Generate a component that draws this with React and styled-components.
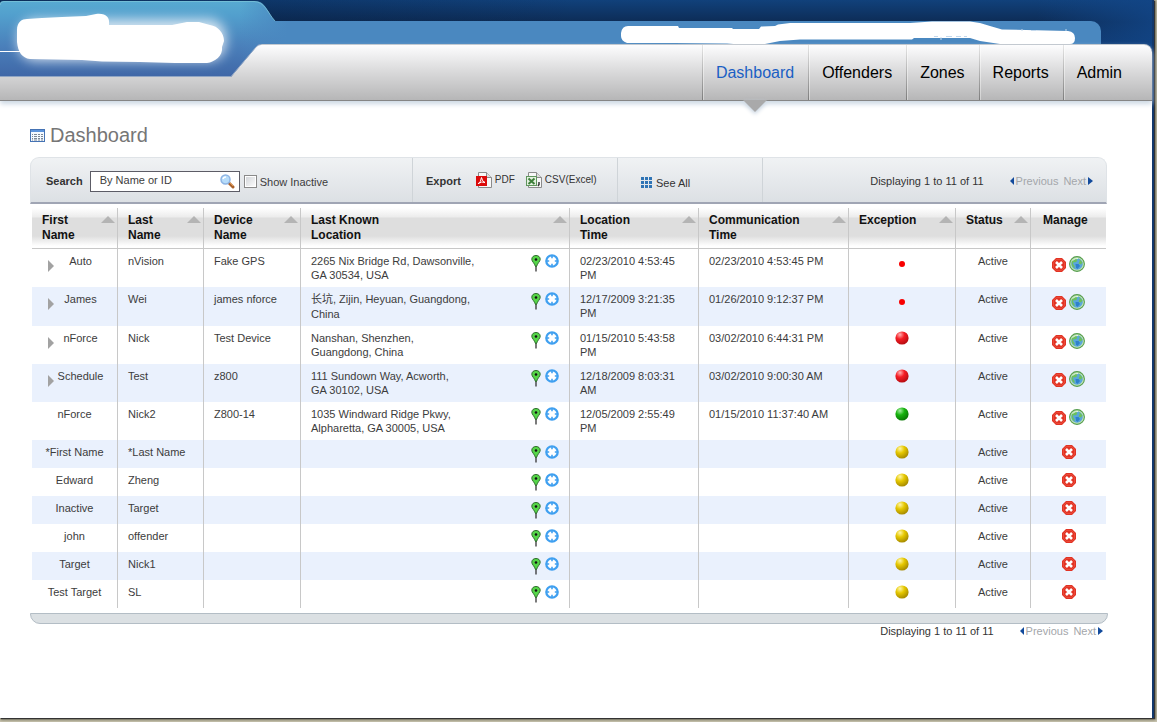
import React, { useState } from "react";
import styled, { createGlobalStyle } from "styled-components";

const GlobalStyle = createGlobalStyle`
  * {
    box-sizing: border-box;
  }

  body {
    margin: 0;
    background: #cdc9b4;
    color: #3c3c3c;
    font-family: "Liberation Sans", Arial, "Noto Sans CJK SC", sans-serif;
    font-size: 11px;
    line-height: 14px;
  }

  button,
  input {
    font: inherit;
    color: inherit;
  }

  svg {
    display: block;
    flex: none;
  }
`;

const Page = styled.div`
  min-height: calc(100vh - 4px);
  margin: 0 3px 4px 0;
  border-right: 2px solid #12386c;
  background: #fff;
  box-shadow: 1px 1px 1px 0 #333, 1px 1px 3px 1px #77745f;
`;

const Header = styled.header`
  position: relative;
  padding-top: 21px;
  background: linear-gradient(
      90deg,
      rgba(4, 22, 50, 0.45),
      rgba(18, 66, 128, 0) 50%,
      rgba(18, 70, 136, 0) 90%,
      rgba(18, 70, 136, 0.8)
    ),
    linear-gradient(#11417b, #0d2c56 22px, #103a72 50px);
`;

const Logo = styled.svg`
  position: absolute;
  top: 0;
  left: 0;
`;

const AccountBar = styled.div`
  display: flex;
  justify-content: flex-end;
  height: 23px;
  margin-right: 51px;
  padding-right: 25px;
  border-radius: 0 10px 0 0;
  background: #4a88c0;
`;

const Nav = styled.nav`
  display: flex;
  justify-content: flex-end;
  height: 57px;
  padding-right: 16px;
  border-top: 1px solid #c3c9d0;
  border-bottom: 1px solid #858585;
  border-radius: 0 8px 0 0;
  background: linear-gradient(#fdfdfe, #dcdcdd 45%, #b6b6b7);
  box-shadow: 0 3px 5px #ccd8e4;
`;

const NavLink = styled.a`
  position: relative;
  display: flex;
  align-items: center;
  padding: 0 14px;
  background: linear-gradient(#e6e6e6, #7d7d7d) 0 0 / 1px 100% no-repeat,
    linear-gradient(#fff, #d2d2d2) 1px 0 / 1px 100% no-repeat;
  color: ${(props) => (props.$active ? "#1a5fc4" : "#000")};
  font-size: 16px;
  text-decoration: none;

  &::after {
    content: "";
    display: ${(props) => (props.$active ? "block" : "none")};
    position: absolute;
    top: 100%;
    left: calc(50% - 12px);
    border: 12px solid transparent;
    border-top-color: #a9a9aa;
    border-bottom: 0;
    filter: drop-shadow(0 2px 2px #c3d0de);
  }
`;

const Main = styled.main`
  padding: 22px 45px 40px 30px;
`;

const Title = styled.h1`
  display: flex;
  align-items: center;
  gap: 5px;
  margin: 0 0 10px;
  color: #767676;
  font-size: 20px;
  font-weight: normal;
  line-height: 24px;
`;

const Toolbar = styled.div`
  display: flex;
  height: 47px;
  border: 1px solid #dfe3e7;
  border-bottom: 2px solid #a0a5b4;
  border-radius: 9px 9px 0 0;
  background: linear-gradient(#f0f2f4, #dce0e4);
`;

const ToolGroup = styled.div`
  display: flex;
  align-items: center;
  width: ${(props) => props.$width || "auto"};
  flex: ${(props) => (props.$width ? "none" : "1")};
  justify-content: ${(props) => (props.$width ? "flex-start" : "flex-end")};
  padding: 2px 13px 0 ${(props) => props.$indent || "13px"};
  border-right: ${(props) => (props.$width ? "1px solid #cfd4d8" : "0")};
`;

const ToolLabel = styled.label`
  margin-right: 7px;
  color: #333;
  font-weight: bold;
`;

const ExportLabel = styled.span`
  margin-right: 15px;
  color: #333;
  font-weight: bold;
`;

const SearchBox = styled.div`
  display: flex;
  align-items: center;
  width: 150px;
  height: 21px;
  margin-right: 4px;
  border: 1px solid #5c5c66;
  background: #fff;
`;

const SearchInput = styled.input`
  flex: 1;
  min-width: 0;
  padding: 0 0 2px 9px;
  border: 0;
  outline: 0;
  background: none;
`;

const IconButton = styled.button`
  display: block;
  padding: 0;
  border: 0;
  background: none;
  cursor: pointer;
`;

const SearchButton = styled(IconButton)`
  padding-right: 4px;
`;

const Checkbox = styled.input`
  appearance: none;
  width: 13px;
  height: 13px;
  margin: 0 3px 0 0;
  border: 1px solid #8a8a8a;
  background: linear-gradient(135deg, #cfd2d6, #fff);
  box-shadow: inset 0 0 0 1px #fff;

  &:checked {
    background: #4a88c0;
  }
`;

const CheckLabel = styled.label`
  padding-top: 2px;
`;

const ToolLink = styled.a`
  display: flex;
  align-items: center;
  gap: ${(props) => (props.$small ? "3px" : "4px")};
  margin-right: 11px;
  padding: ${(props) => (props.$small ? "0 0 2px" : "3px 0 0")};
  color: #333;
  font-size: ${(props) => (props.$small ? "10px" : "11px")};
  text-decoration: none;
`;

const PagerBar = styled.div`
  display: flex;
  align-items: center;
  justify-content: flex-end;
  gap: 5px;
`;

const PagerCount = styled.span`
  margin-right: 21px;
  color: #333;
`;

const PagerButton = styled.button`
  display: flex;
  align-items: center;
  gap: 2px;
  padding: 0;
  border: 0;
  background: none;
  color: #a3a6aa;
`;

const Footer = styled.div`
  padding-right: 4px;
`;

const Grid = styled.table`
  width: calc(100% - 3px);
  margin: 4px 1px 5px 2px;
  border-collapse: separate;
  border-spacing: 0;
  table-layout: fixed;
`;

const HeadCell = styled.th`
  width: ${(props) => props.$width || "auto"};
  height: 41px;
  padding: 5px 2px 0 10px;
  border-right: 1px solid #c8c8c8;
  border-bottom: 1px solid #c8c8c8;
  background: linear-gradient(#fff, #ececec 9px, #dedede 10px, #dedede 28px, #fff 38px);
  color: #111;
  font-size: 12px;
  line-height: 15px;
  text-align: left;
  vertical-align: top;
  white-space: pre-line;

  &:last-child {
    padding-left: 12px;
    border-right: 0;
  }
`;

const SortButton = styled.button`
  display: flex;
  justify-content: space-between;
  align-items: flex-start;
  width: 100%;
  padding: 0;
  border: 0;
  background: none;
  text-align: left;
  white-space: pre-line;
  cursor: pointer;
`;

const SortArrow = styled.span`
  margin-top: 3px;
  border: 7px solid transparent;
  border-top: 0;
  border-bottom: 7px solid #b4b4b4;
`;

const Row = styled.tr`
  height: ${(props) => (props.$tall ? "38px" : "28px")};

  &:nth-child(even) {
    background: #eaf1fd;
  }
`;

const Cell = styled.td`
  padding: 5px 10px 4px;
  border-right: 1px solid #c8c8c8;
  text-align: ${(props) => (props.$center ? "center" : "left")};
  vertical-align: top;
  white-space: ${(props) => (props.$wrap ? "normal" : "nowrap")};

  &:last-child {
    border-right: 0;
  }
`;

const NameBox = styled.div`
  display: flex;
  align-items: flex-start;
`;

const NameText = styled.span`
  flex: 1;
  text-align: center;
`;

const ExpandButton = styled(IconButton)`
  padding: 6px 0 0 6px;
`;

const Address = styled.div`
  display: flex;
  justify-content: space-between;
  white-space: pre-line;
`;

/* Han glyphs need a slightly taller line */
const AddressText = styled.div`
  line-height: ${(props) => (props.$han ? "15px" : "14px")};
`;

const AddressIcons = styled.div`
  display: flex;
  align-items: flex-start;
  gap: 4px;
`;

const Center = styled.div`
  display: flex;
  justify-content: center;
  padding-top: ${(props) => (props.$small ? "7px" : "0")};
`;

const ManageButtons = styled.div`
  display: flex;
  align-items: flex-end;
  justify-content: center;
  gap: 3px;
  padding-top: ${(props) => (props.$tall ? "2px" : "0")};
`;

const BottomBar = styled.div`
  height: 11px;
  margin-right: -1px;
  border: 1px solid #b3bdc5;
  border-radius: 0 0 10px 10px;
  background: #dbe0e3;
`;

const ballColors = {
  red: ["#ffb0b0", "#f51d24", "#b80d12"],
  green: ["#a5eda0", "#17b30e", "#0a7a05"],
  yellow: ["#fff6a8", "#e6c800", "#a88c00"],
};

function LogoArt() {
  return (
    <Logo width="300" height="78" viewBox="0 0 300 78" aria-hidden="true">
      <defs>
        <linearGradient id="tab" x1="0" y1="0" x2="0" y2="1">
          <stop offset="0" stopColor="#58abd2" />
          <stop offset="0.2" stopColor="#529fcd" />
          <stop offset="0.6" stopColor="#4a7fba" />
          <stop offset="1" stopColor="#3f66a6" />
        </linearGradient>
        <linearGradient id="fade" x1="0" y1="0" x2="1" y2="0">
          <stop offset="0" stopColor="#4a88c0" stopOpacity="0" />
          <stop offset="0.8" stopColor="#4a88c0" />
        </linearGradient>
        <filter id="glow" x="-20%" y="-50%" width="140%" height="200%">
          <feGaussianBlur stdDeviation="6" />
        </filter>
        <clipPath id="tabClip">
          <path d="M0 4Q0 1 4 1H254C266 1 267 12 275 21H300V44H262Q259 44 256 47L231 77H0Z" />
        </clipPath>
      </defs>
      <g clipPath="url(#tabClip)">
        <rect width="300" height="78" fill="url(#tab)" />
        <rect x="240" width="60" height="78" fill="url(#fade)" />
        <rect x="18" y="19" width="208" height="42" rx="18" fill="#fff" opacity="0.75" filter="url(#glow)" />
        <path d="M0 51.500H22" stroke="#fff" />
      </g>
      <path
        d="M0 5Q0 1.500 4 1.500H254C265 2 267 12 275 21"
        fill="none"
        stroke="#7fc6d8"
        opacity="0.7"
      />
      <path d="M0 76.500H231L256 47Q258 44.500 261 44.500" fill="none" stroke="#8fa5c4" />
      <path
        fill="#fff"
        d="M17 30C17 22 22 19 27 19L42 18 62 17 86 16 96 14C106 13 110 17 109 25H172L187 22H199L210 25C218 26 224 33 224 41L222 47C223 56 215 62 207 63H175L140 62 102 61.500 82 60 30 59C22 58 18 52 17 42Z"
      />
    </Logo>
  );
}

function AccountArt() {
  return (
    <svg width="455" height="23" viewBox="621 21 455 23" aria-hidden="true">
      <path
        fill="#fff"
        d="M621 33Q622 26 628 26H678L679 28H732L733 29H759L761 26.500 775 26 778 24.500 790 23H910L932 21.500H970L980 23 990 26 1002 29.500 1068 31Q1075 32 1075 38T1070 44H1000L980 41 970 38H914L912 39.500H800L780 41 765 44 740 44.500 727 43.500 675 43H627Q621 41 621 36Z"
      />
      <path
        d="M934 36.500H938M941 37V40M946 36.500H952M956 36.500H961M964 36.500H967M1022 29V31M1031 30.500H1036M1066 29V31"
        stroke="#c3d8ec"
        fill="none"
      />
    </svg>
  );
}

function ListIcon() {
  return (
    <svg width="15" height="13" viewBox="0 0 15 13">
      <rect x="0.500" y="0.500" width="14" height="12" fill="#f4f9ff" stroke="#4573b4" />
      <path d="M1 1H14V3H1Z" fill="#5b93dc" />
      <path
        d="M2 5.500H13M2 7.500H13M2 9.500H13M2 11H13"
        stroke="#7b8796"
        strokeDasharray="1 1 3 1 2 1 3"
      />
    </svg>
  );
}

function SearchIcon() {
  return (
    <svg width="15" height="15" viewBox="0 0 15 15">
      <path d="M9 9L13 13" stroke="#a8612c" strokeWidth="3" strokeLinecap="round" />
      <path d="M9.500 8.500L13 12" stroke="#e39a52" strokeWidth="1" />
      <circle cx="5.500" cy="5.500" r="4.500" fill="#b6dcfa" stroke="#8db4e4" strokeWidth="1.500" />
      <path d="M3 5Q3.500 3 6 3" stroke="#fff" strokeWidth="1.500" fill="none" />
    </svg>
  );
}

function PdfIcon() {
  return (
    <svg width="16" height="16" viewBox="0 0 16 16">
      <path d="M2.500 0.500H10.500L15.500 5.500V15.500H2.500Z" fill="#f8f8f8" stroke="#8b8b8b" />
      <path d="M10.500 0.500V5.500H15.500" fill="#ddd" stroke="#8b8b8b" />
      <rect y="4" width="11" height="10" fill="#dc0a0a" />
      <path
        d="M2 12Q5 10 5.500 5.500Q6 9.500 9 10.500Q5.500 9 2.500 11.500"
        fill="none"
        stroke="#fff"
      />
    </svg>
  );
}

function CsvIcon() {
  return (
    <svg width="16" height="16" viewBox="0 0 16 16">
      <path d="M2.500 0.500H10.500L15.500 5.500V15.500H2.500Z" fill="#f8f8f8" stroke="#8b8b8b" />
      <path d="M10.500 0.500V5.500H15.500" fill="#ddd" stroke="#8b8b8b" />
      <rect x="0.500" y="4.500" width="10" height="9" fill="#e4f1e0" stroke="#5f955c" />
      <path d="M2.500 6.500L8.500 12M8.500 6.500L2.500 12" stroke="#3d7f3a" strokeWidth="2" />
      <path d="M13 10V12.500L12 14" stroke="#333" strokeWidth="1.500" fill="none" />
    </svg>
  );
}

function GridIcon() {
  return (
    <svg width="11" height="11" viewBox="0 0 11 11" fill="#2f74b5">
      <path d="M0 0H3V3H0ZM4 0H7V3H4ZM8 0H11V3H8ZM0 4H3V7H0ZM4 4H7V7H4ZM8 4H11V7H8ZM0 8H3V11H0ZM4 8H7V11H4ZM8 8H11V11H8Z" />
    </svg>
  );
}

function PinIcon() {
  return (
    <svg width="10" height="18" viewBox="0 0 10 18">
      <path d="M5 11V17.500" stroke="#222" strokeWidth="1.200" />
      <path
        d="M5 1.500C2.500 1.500 0.800 3 0.800 5.300C0.800 7.500 3.500 9 4.500 12.500H5.500C6.500 9 9.200 7.500 9.200 5.300C9.200 3 7.500 1.500 5 1.500Z"
        fill="#55d648"
        stroke="#2d6b2b"
      />
      <circle cx="5" cy="5.500" r="1.300" fill="#111" />
    </svg>
  );
}

function TargetIcon() {
  return (
    <svg width="14" height="14" viewBox="0 0 14 14">
      <circle cx="7" cy="7" r="5.700" fill="#fff" stroke="#40a0f0" strokeWidth="2.300" />
      <path
        d="M7 2V4.200M7 9.800V12M2 7H4.200M9.800 7H12"
        stroke="#40a0f0"
        strokeWidth="1.600"
      />
    </svg>
  );
}

function DeleteIcon() {
  return (
    <svg width="14" height="14" viewBox="0 0 14 14">
      <path d="M4 0H10L14 4V10L10 14H4L0 10V4Z" fill="#e23324" />
      <path d="M4.500 1.500H9.500L12.500 4.500V9.500L9.500 12.500H4.500L1.500 9.500V4.500Z" fill="none" stroke="#ee5a48" strokeWidth="0.600" />
      <path d="M4 4L10 10M10 4L4 10" stroke="#fff" strokeWidth="2.600" />
    </svg>
  );
}

function GlobeIcon() {
  return (
    <svg width="16" height="16" viewBox="0 0 16 16">
      <circle cx="8" cy="8" r="7.400" fill="#c4e6b4" stroke="#559c4e" strokeWidth="1.100" />
      <circle cx="8" cy="8" r="5.800" fill="#5aa6dc" />
      <path
        d="M3 5Q5 2 9 2.300L7.500 4 8.500 5 6 6.500 4.500 6 4 8 5.500 10 5.500 12.500Q1.500 10 3 5ZM10.500 3L13.500 6.500 12 8.500 9.500 7.500 10.500 5.500Z"
        fill="#6cc05c"
      />
      <path d="M6.500 8L9.500 8 11 10 8.500 13 7 11.500Z" fill="#2e80cc" />
      <path d="M3.500 4.500Q6 2 9 2.500" stroke="#e7f6df" fill="none" />
    </svg>
  );
}

function Triangle({ direction, width, height, color }) {
  const d =
    direction === "left"
      ? `M${width} 0V${height}L0 ${height / 2}Z`
      : `M0 0V${height}L${width} ${height / 2}Z`;
  return (
    <svg width={width} height={height}>
      <path d={d} fill={color} />
    </svg>
  );
}

function StatusBall({ type }) {
  if (type === "dot") {
    return (
      <svg width="6" height="6" viewBox="0 0 6 6">
        <circle cx="3" cy="3" r="3" fill="#f80000" />
      </svg>
    );
  }

  const [light, base, dark] = ballColors[type];
  return (
    <svg width="14" height="14" viewBox="0 0 14 14">
      <defs>
        <radialGradient id={"ball-" + type} cx="0.350" cy="0.250" r="0.750">
          <stop offset="0" stopColor={light} />
          <stop offset="0.450" stopColor={base} />
          <stop offset="1" stopColor={dark} />
        </radialGradient>
      </defs>
      <circle cx="7" cy="7" r="6.600" fill={`url(#ball-${type})`} />
    </svg>
  );
}

function Pager() {
  return (
    <PagerBar>
      <PagerCount>Displaying 1 to 11 of 11</PagerCount>
      <PagerButton type="button">
        <Triangle direction="left" width={4} height={8} color="#124a9c" />
        Previous
      </PagerButton>
      <PagerButton type="button">
        Next
        <Triangle direction="right" width={5} height={8} color="#124a9c" />
      </PagerButton>
    </PagerBar>
  );
}

const navItems = ["Dashboard", "Offenders", "Zones", "Reports", "Admin"];

const columns = [
  { label: "First\nName", width: "86px", sortable: true },
  { label: "Last\nName", width: "86px", sortable: true },
  { label: "Device\nName", width: "97px", sortable: true },
  { label: "Last Known\nLocation", sortable: true },
  { label: "Location\nTime", width: "129px", sortable: true },
  { label: "Communication\nTime", width: "150px", sortable: true },
  { label: "Exception", width: "107px", sortable: true },
  { label: "Status", width: "75px", sortable: true },
  { label: "Manage", width: "75px" },
];

const offenders = [
  {
    first: "Auto",
    last: "nVision",
    device: "Fake GPS",
    address: "2265 Nix Bridge Rd, Dawsonville,\nGA 30534, USA",
    located: "02/23/2010 4:53:45 PM",
    contacted: "02/23/2010 4:53:45 PM",
    exception: "dot",
    expandable: true,
  },
  {
    first: "James",
    last: "Wei",
    device: "james nforce",
    address: "长坑, Zijin, Heyuan, Guangdong,\nChina",
    han: true,
    located: "12/17/2009 3:21:35 PM",
    contacted: "01/26/2010 9:12:37 PM",
    exception: "dot",
    expandable: true,
  },
  {
    first: "nForce",
    last: "Nick",
    device: "Test Device",
    address: "Nanshan, Shenzhen,\nGuangdong, China",
    located: "01/15/2010 5:43:58 PM",
    contacted: "03/02/2010 6:44:31 PM",
    exception: "red",
    expandable: true,
  },
  {
    first: "Schedule",
    last: "Test",
    device: "z800",
    address: "111 Sundown Way, Acworth,\nGA 30102, USA",
    located: "12/18/2009 8:03:31 AM",
    contacted: "03/02/2010 9:00:30 AM",
    exception: "red",
    expandable: true,
  },
  {
    first: "nForce",
    last: "Nick2",
    device: "Z800-14",
    address: "1035 Windward Ridge Pkwy,\nAlpharetta, GA 30005, USA",
    located: "12/05/2009 2:55:49 PM",
    contacted: "01/15/2010 11:37:40 AM",
    exception: "green",
  },
  { first: "*First Name", last: "*Last Name", exception: "yellow" },
  { first: "Edward", last: "Zheng", exception: "yellow" },
  { first: "Inactive", last: "Target", exception: "yellow" },
  { first: "john", last: "offender", exception: "yellow" },
  { first: "Target", last: "Nick1", exception: "yellow" },
  { first: "Test Target", last: "SL", exception: "yellow" },
];

function OffenderRow(props) {
  const tall = Boolean(props.device);

  return (
    <Row $tall={tall}>
      <Cell $center>
        <NameBox>
          {props.expandable ? (
            <ExpandButton type="button" aria-label="Expand">
              <Triangle direction="right" width={6} height={12} color="#a2a2a2" />
            </ExpandButton>
          ) : null}
          <NameText>{props.first}</NameText>
        </NameBox>
      </Cell>
      <Cell>{props.last}</Cell>
      <Cell>{props.device}</Cell>
      <Cell>
        <Address>
          <AddressText $han={props.han}>{props.address}</AddressText>
          <AddressIcons>
            <IconButton type="button" aria-label="Show on map">
              <PinIcon />
            </IconButton>
            <IconButton type="button" aria-label="Locate">
              <TargetIcon />
            </IconButton>
          </AddressIcons>
        </Address>
      </Cell>
      <Cell $wrap>{props.located}</Cell>
      <Cell>{props.contacted}</Cell>
      <Cell>
        <Center $small={props.exception === "dot"}>
          <StatusBall type={props.exception} />
        </Center>
      </Cell>
      <Cell $center>Active</Cell>
      <Cell>
        <ManageButtons $tall={tall}>
          <IconButton type="button" aria-label="Delete">
            <DeleteIcon />
          </IconButton>
          {tall ? (
            <IconButton type="button" aria-label="Zones">
              <GlobeIcon />
            </IconButton>
          ) : null}
        </ManageButtons>
      </Cell>
    </Row>
  );
}

function App() {
  const [search, setSearch] = useState("By Name or ID");

  return (
    <>
      <GlobalStyle />
      <Page>
        <Header>
          <AccountBar>
            <AccountArt />
          </AccountBar>
          <Nav>
            {navItems.map((item, index) => (
              <NavLink key={item} href={"#" + item.toLowerCase()} $active={index === 0}>
                {item}
              </NavLink>
            ))}
          </Nav>
          <LogoArt />
        </Header>
        <Main>
          <Title>
            <ListIcon />
            Dashboard
          </Title>
          <Toolbar>
            <ToolGroup $width="382px" $indent="15px">
              <ToolLabel htmlFor="search">Search</ToolLabel>
              <SearchBox>
                <SearchInput
                  id="search"
                  value={search}
                  onChange={(e) => setSearch(e.target.value)}
                />
                <SearchButton type="button" aria-label="Search">
                  <SearchIcon />
                </SearchButton>
              </SearchBox>
              <Checkbox type="checkbox" id="inactive" />
              <CheckLabel htmlFor="inactive">Show Inactive</CheckLabel>
            </ToolGroup>
            <ToolGroup $width="205px">
              <ExportLabel>Export</ExportLabel>
              <ToolLink href="#pdf" $small>
                <PdfIcon />
                PDF
              </ToolLink>
              <ToolLink href="#csv" $small>
                <CsvIcon />
                CSV(Excel)
              </ToolLink>
            </ToolGroup>
            <ToolGroup $width="145px" $indent="23px">
              <ToolLink href="#all">
                <GridIcon />
                See All
              </ToolLink>
            </ToolGroup>
            <ToolGroup>
              <Pager />
            </ToolGroup>
          </Toolbar>
          <Grid>
            <thead>
              <tr>
                {columns.map((column) => (
                  <HeadCell key={column.label} $width={column.width}>
                    {column.sortable ? (
                      <SortButton type="button">
                        {column.label}
                        <SortArrow />
                      </SortButton>
                    ) : (
                      column.label
                    )}
                  </HeadCell>
                ))}
              </tr>
            </thead>
            <tbody>
              {offenders.map((item, index) => (
                <OffenderRow key={index} {...item} />
              ))}
            </tbody>
          </Grid>
          <BottomBar />
          <Footer>
            <Pager />
          </Footer>
        </Main>
      </Page>
    </>
  );
}

export default App;
